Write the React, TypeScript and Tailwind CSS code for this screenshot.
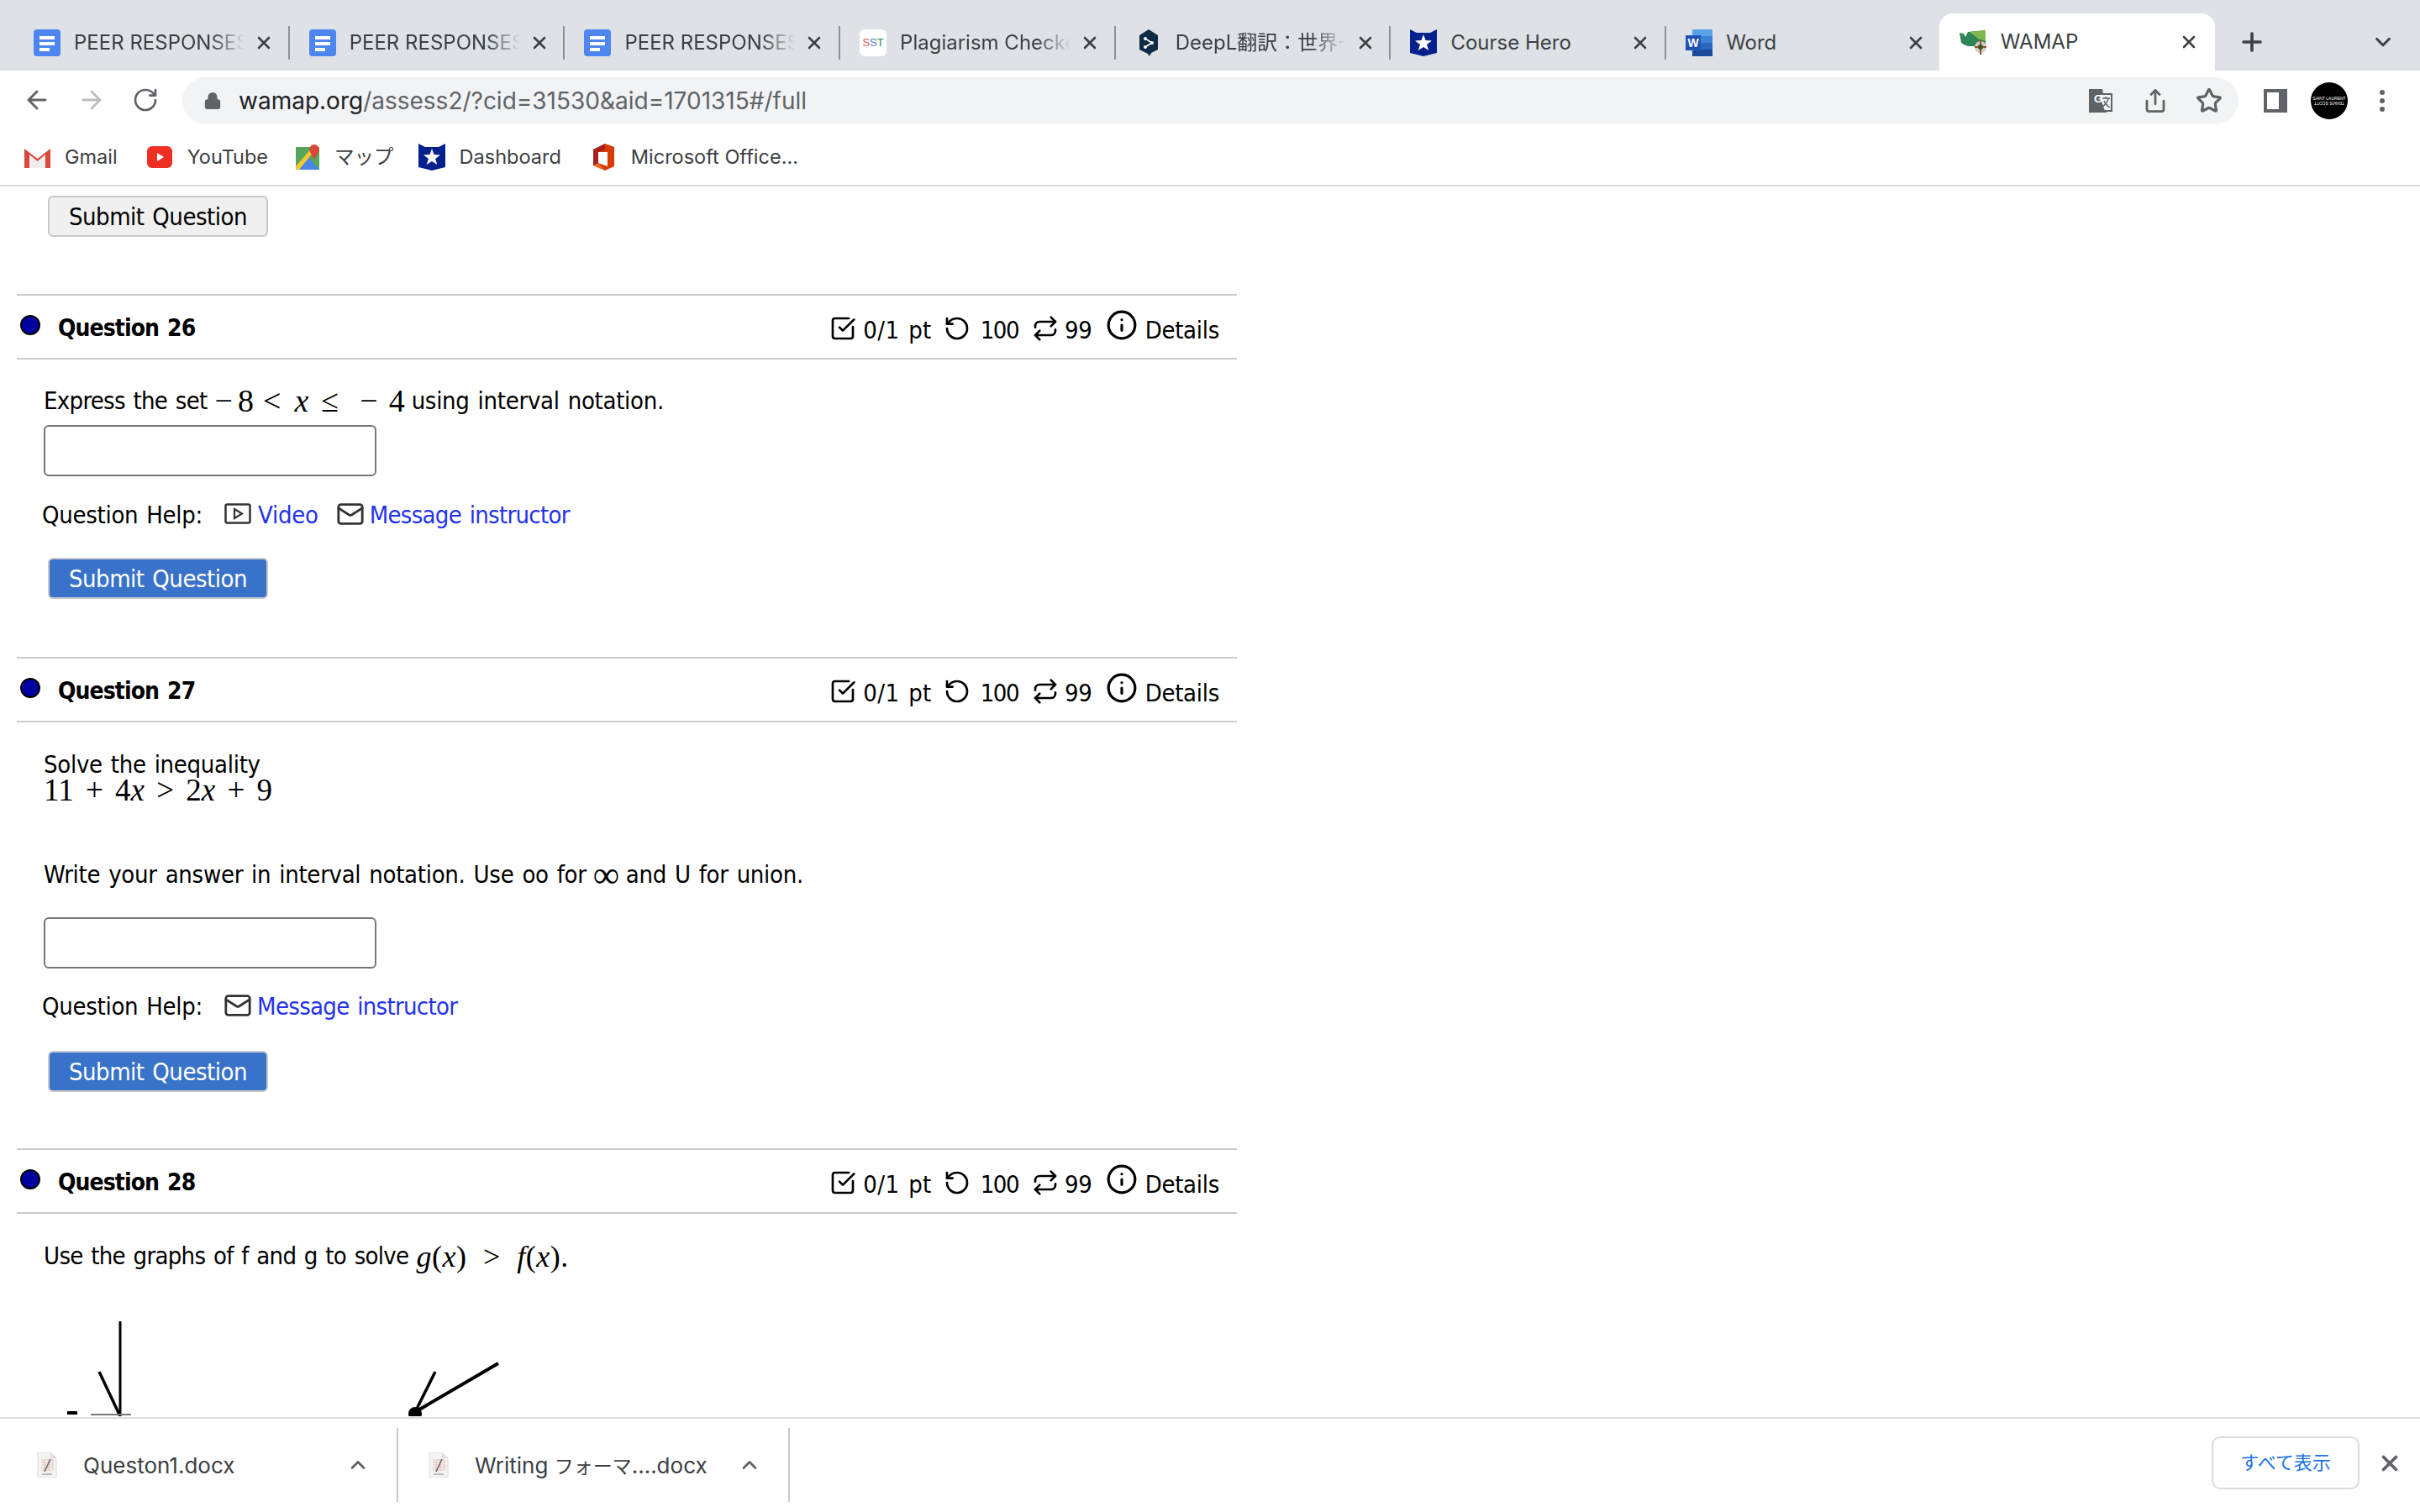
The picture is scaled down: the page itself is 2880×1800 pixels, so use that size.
import React from 'react';
import { ArrowLeft, ArrowRight, ChevronDown, ChevronUp, Info, Lock, Mail, Plus, Repeat, RotateCcw, RotateCw, Share, SquareCheckBig, Star, X } from 'lucide-react';

const chromeFont = "font-['Inter','Noto_Sans_CJK_JP',sans-serif]";
const pageFont = "font-['DejaVu_Sans_Condensed','DejaVu_Sans',sans-serif]";
const mathFont = "font-['Liberation_Serif',serif]";

function DocIcon() {
    return (
        <svg width="32" height="32" viewBox="0 0 32 32" className="shrink-0">
            <rect x="0" y="0" width="32" height="32" rx="4" fill="#4d86ee" />
            <rect x="7" y="8" width="18" height="4" fill="#fff" />
            <rect x="7" y="15" width="18" height="4" fill="#fff" />
            <rect x="7" y="22" width="12" height="4" fill="#fff" />
        </svg>
    );
}

function SstIcon() {
    return (
        <div className="w-[32px] h-[32px] shrink-0 rounded-[6px] bg-white flex items-center justify-center text-[13px] font-['Liberation_Sans',sans-serif]">
            <span className="text-[#e0584f]">S</span>
            <span className="text-[#4a80d8]">S</span>
            <span className="text-[#2f8a55]">T</span>
        </div>
    );
}

function DeeplIcon() {
    return (
        <svg width="32" height="32" viewBox="0 0 32 32" className="shrink-0">
            <path d="M16 0 L27 7 V24 L19 28 L17 32 L15 29 L5 24 V7 Z" fill="#0f2b46" />
            <circle cx="12" cy="11" r="2" fill="#fff" />
            <circle cx="12" cy="21" r="2" fill="#fff" />
            <circle cx="20" cy="16" r="2" fill="#fff" />
            <path d="M12 11 L20 16 L12 21" stroke="#fff" strokeWidth="1.6" fill="none" />
        </svg>
    );
}

function HeroIcon({ size = 32 }: { size?: number }) {
    return (
        <svg width={size} height={size} viewBox="0 0 32 32" className="shrink-0">
            <path d="M0 0 L8 4 H24 L32 0 V28 L16 32 L0 28 Z" fill="#04208c" />
            <path d="M16 6 L18.6 13 L26 13.4 L20 18 L22.3 25 L16 21 L9.7 25 L12 18 L6 13.4 L13.4 13 Z" fill="#fff" />
        </svg>
    );
}

function WordIcon() {
    return (
        <svg width="32" height="32" viewBox="0 0 32 32" className="shrink-0">
            <rect x="8" y="0" width="24" height="8" fill="#5aa3ea" />
            <rect x="8" y="8" width="24" height="8" fill="#3b82d8" />
            <rect x="8" y="16" width="24" height="8" fill="#2a66bd" />
            <rect x="8" y="24" width="24" height="8" fill="#1c4a9a" />
            <rect x="0" y="7" width="18" height="18" fill="#1f54b4" />
            <text x="9" y="21" textAnchor="middle" fontSize="14" fontWeight="700" fill="#fff" fontFamily="Liberation Sans">W</text>
        </svg>
    );
}

function WamapIcon() {
    return (
        <svg width="32" height="32" viewBox="0 0 32 32" className="shrink-0">
            <path d="M0 5 L5 6 L7 10 L10 4 L31 2 V22 L22 21 L10 21 L5 19 L2 17 Z" fill="#2f8555" />
            <path d="M12 4 L31 2 V15 L22 12 Z" fill="#7fb84e" />
            <circle cx="25" cy="22" r="7" fill="#cfcfc0" />
            <path d="M25 14 V31 M18 22 H32" stroke="#a5491e" strokeWidth="2" />
            <circle cx="25" cy="22" r="3" fill="#3a5a2a" />
        </svg>
    );
}

const tabs = [
    { title: 'PEER RESPONSES', icon: <DocIcon />, fade: true },
    { title: 'PEER RESPONSES', icon: <DocIcon />, fade: true },
    { title: 'PEER RESPONSES', icon: <DocIcon />, fade: true },
    { title: 'Plagiarism Checker', icon: <SstIcon />, fade: true },
    { title: 'DeepL翻訳：世界一', icon: <DeeplIcon />, fade: true },
    { title: 'Course Hero', icon: <HeroIcon />, fade: false },
    { title: 'Word', icon: <WordIcon />, fade: false },
];

function Tab({ title, icon, fade }: { title: string; icon: React.ReactNode; fade: boolean }) {
    return (
        <div className="w-[327.7px] h-[40px] shrink-0 flex items-center pl-[23px] border-r-2 border-[#8e9196]">
            {icon}
            <div className={`ml-[16px] w-[203px] overflow-hidden whitespace-nowrap text-[24px] text-[#3c4043] ${fade ? '[mask-image:linear-gradient(to_right,black_80%,transparent)]' : ''}`}>
                {title}
            </div>
            <X size={24} strokeWidth={2.6} className="ml-[11px] text-[#3c4043]" />
        </div>
    );
}

function TabStrip() {
    return (
        <div className={`h-[84px] bg-[#dee1e6] flex items-start pl-[17px] shrink-0 ${chromeFont}`}>
            <div className="flex mt-[31px]">
                {tabs.map((t, i) => (
                    <Tab key={i} {...t} />
                ))}
            </div>
            <div className="w-[328px] h-[68px] mt-[16px] -ml-[3px] shrink-0 bg-white rounded-t-[16px] flex items-center pl-[24px]">
                <WamapIcon />
                <div className="ml-[17px] w-[203px] text-[24px] text-[#3c4043]">WAMAP</div>
                <X size={24} strokeWidth={2.6} className="ml-[9px] text-[#3c4043]" />
            </div>
            <Plus size={34} strokeWidth={2.6} className="mt-[33px] ml-[27px] text-[#3c4043]" />
            <ChevronDown size={30} strokeWidth={2.4} className="mt-[35px] ml-[124px] text-[#3c4043]" />
        </div>
    );
}

function Toolbar() {
    return (
        <div className="h-[64px] pt-[8px] flex items-start bg-white shrink-0">
            <ArrowLeft size={34} strokeWidth={2} className="ml-[27px] mt-[10px] text-[#5f6368]" />
            <ArrowRight size={34} strokeWidth={2} className="ml-[31px] mt-[10px] text-[#babcbe]" />
            <RotateCw size={32} strokeWidth={2} className="ml-[31px] mt-[11px] text-[#5f6368]" />
            <div className={`ml-[28px] w-[2447px] h-[56px] rounded-full bg-[#f1f3f4] flex items-center pl-[25px] ${chromeFont}`}>
                <Lock size={22} fill="#5f6368" className="text-[#5f6368]" />
                <div className="ml-[20px] text-[28px] text-[#5f6368] whitespace-nowrap">
                    <span className="text-[#202124]">wamap.org</span>/assess2/?cid=31530&amp;aid=1701315#/full
                </div>
                <div className="ml-auto flex items-center">
                    <svg width="30" height="30" viewBox="0 0 30 30">
                        <path d="M1 1 H17 L22 29 H1 Z" fill="#5f6368" />
                        <path d="M12 7 H28 V27 H19 Z" fill="#f1f3f4" stroke="#5f6368" strokeWidth="2" />
                        <text x="7" y="17" fontSize="13" fontWeight="700" fill="#fff" fontFamily="Liberation Sans">G</text>
                        <path d="M17 12 H26 M21 10 V12 M24 12 C23 17 20 20 17 22 M19 15 C20 18 23 21 26 23" stroke="#5f6368" strokeWidth="1.4" fill="none" />
                    </svg>
                    <Share size={30} strokeWidth={2.2} className="ml-[35px] text-[#5f6368]" />
                    <Star size={32} strokeWidth={2.4} className="ml-[33px] mr-[19px] text-[#5f6368]" />
                </div>
            </div>
            <div className="ml-[30px] mt-[14px] w-[28px] h-[28px] border-[4px] border-r-[10px] border-[#5f6368] bg-white" />
            <div className="ml-[28px] mt-[6px] w-[44px] h-[44px] rounded-full bg-black flex flex-col items-center justify-center text-white text-[5px] leading-[6px] font-['Liberation_Sans',sans-serif] whitespace-nowrap">
                <span>SAINT LAURENT</span>
                <span className="rotate-180">TRAVIS SCOTT</span>
            </div>
            <div className="ml-[38px] mt-[15px] flex flex-col gap-[4px]">
                <span className="w-[6px] h-[6px] rounded-full bg-[#5f6368]" />
                <span className="w-[6px] h-[6px] rounded-full bg-[#5f6368]" />
                <span className="w-[6px] h-[6px] rounded-full bg-[#5f6368]" />
            </div>
        </div>
    );
}

function Bookmark({ icon, label, gap, left }: { icon: React.ReactNode; label: string; gap: string; left: string }) {
    return (
        <div className={`flex items-center ${left}`}>
            {icon}
            <span className={`${gap} text-[23.5px] text-[#3c4043] whitespace-nowrap`}>{label}</span>
        </div>
    );
}

function BookmarksBar() {
    return (
        <div className={`h-[74px] pt-[6px] flex items-center bg-white border-b-2 border-[#dadce0] shrink-0 ${chromeFont}`}>
            <Bookmark
                left="ml-[29px]"
                gap="ml-[17px]"
                label="Gmail"
                icon={
                    <svg width="31" height="26" viewBox="0 0 31 26">
                        <path d="M6 10 L15.5 18 L25 10 V26 H6 Z" fill="#eeeeee" />
                        <path d="M0 3 L15.5 15 L31 3 V26 H25 V10 L15.5 18 L6 10 V26 H0 Z" fill="#d9483b" />
                    </svg>
                }
            />
            <Bookmark
                left="ml-[35px]"
                gap="ml-[18px]"
                label="YouTube"
                icon={
                    <svg width="30" height="30" viewBox="0 0 30 30">
                        <rect x="0" y="2" width="30" height="26" rx="6" fill="#ef2f24" />
                        <path d="M12 10 L20 15 L12 20 Z" fill="#fff" />
                    </svg>
                }
            />
            <Bookmark
                left="ml-[33px]"
                gap="ml-[18px]"
                label="マップ"
                icon={
                    <svg width="28" height="30" viewBox="0 0 28 30">
                        <rect x="0" y="3" width="28" height="27" fill="#58a55c" />
                        <path d="M0 30 L14 14 L28 30 Z" fill="#4a86e8" />
                        <path d="M0 26 L20 3 H26 L4 30 H0 Z" fill="#f6c731" />
                        <path d="M22 0 C27 0 29 6 27 9 L22 18 L17 9 C15 6 17 0 22 0 Z" fill="#d9483b" />
                    </svg>
                }
            />
            <Bookmark left="ml-[29px]" gap="ml-[17px]" label="Dashboard" icon={<HeroIcon size={32} />} />
            <Bookmark
                left="ml-[38px]"
                gap="ml-[20px]"
                label="Microsoft Office..."
                icon={
                    <svg width="25" height="32" viewBox="0 0 25 32">
                        <path d="M14 0 L25 4 V27 L14 32 L0 26 V7 Z" fill="#d83b01" />
                        <path d="M14 0 L0 7 V26 L6 23 V10 L14 7 Z" fill="#a5201c" />
                        <path d="M6 10 H17 V27 L6 23 Z" fill="#fff" />
                        <path d="M0 26 L14 32 L6 23 Z" fill="#ea6a2d" />
                    </svg>
                }
            />
        </div>
    );
}

function SubmitButton({ primary }: { primary?: boolean }) {
    return (
        <div className={`ml-[5px] w-[262px] h-[49px] pt-[3px] rounded-[6px] border-2 border-[#c8c8c8] flex items-center justify-center tracking-[-0.5px] ${primary ? 'bg-[#3973c9] text-white' : 'bg-[#f0f0f0] text-black'}`}>
            Submit Question
        </div>
    );
}

function QuestionHeader({ n }: { n: number }) {
    return (
        <div className="h-[78px] border-y-2 border-[#cccccc] flex items-center text-black">
            <div className="ml-[4px] w-[24px] h-[24px] rounded-full bg-[#0000a0] border-2 border-black -mt-[4px]" />
            <div className="ml-[21px] text-[28px] tracking-[-0.9px] font-bold whitespace-nowrap mt-[3px]">Question {n}</div>
            <div className="ml-auto mr-[21px] flex items-center whitespace-nowrap">
                <SquareCheckBig size={32} strokeWidth={2} className="mt-[3px]" />
                <span className="ml-[8px] mt-[10px] tracking-[0.4px]">0/1 pt</span>
                <RotateCcw size={32} strokeWidth={2} className="ml-[14px] mt-[3px]" />
                <span className="ml-[12px] mt-[10px] tracking-[-1.5px]">100</span>
                <Repeat size={32} strokeWidth={2} className="ml-[16px] mt-[3px]" />
                <span className="ml-[7px] mt-[10px]">99</span>
                <Info size={38} strokeWidth={2} className="ml-[16px] -mt-[4px]" />
                <span className="ml-[9px] mt-[10px]">Details</span>
            </div>
        </div>
    );
}

function AnswerBox() {
    return <div className="w-[396px] h-[61px] rounded-[6px] border-2 border-[#767676] bg-white" />;
}

function QuestionHelp({ video }: { video?: boolean }) {
    return (
        <div className="h-[40px] -ml-[2px] flex items-center text-black whitespace-nowrap">
            <span>Question Help:</span>
            {video && (
                <>
                    <svg width="32" height="26" viewBox="0 0 32 26" className="ml-[26px] -mt-[4px]">
                        <rect x="1.5" y="1.5" width="29" height="22" rx="2" fill="none" stroke="#333" strokeWidth="2.5" />
                        <path d="M12 7 L21 12.5 L12 18 Z" fill="none" stroke="#333" strokeWidth="2.2" />
                    </svg>
                    <span className="ml-[8px] text-[#2433ea]">Video</span>
                </>
            )}
            <Mail size={34} strokeWidth={2} className={`${video ? 'ml-[21px]' : 'ml-[25px]'} -mt-[4px] text-[#333]`} />
            <span className="ml-[6px] text-[#2433ea] tracking-[-0.7px]">Message instructor</span>
        </div>
    );
}

export default function App() {
    return (
        <div className={`w-[2880px] h-[1800px] flex flex-col overflow-hidden bg-white ${pageFont}`}>
            <TabStrip />
            <Toolbar />
            <BookmarksBar />
            <main className="flex-1 min-h-0 overflow-hidden ml-[20px] w-[1452px] text-[29px] tracking-[-0.3px] [word-spacing:2px] text-black">
                <div className="pt-[11px] pl-[32px]">
                    <SubmitButton />
                </div>

                <section className="mt-[68px]">
                    <QuestionHeader n={26} />
                    <div className="pl-[32px]">
                        <div className="mt-[30px] h-[40px] flex items-center whitespace-nowrap">
                            <span className="tracking-[-0.7px]">Express the set</span>
                            <span className={`ml-[9px] -mt-[3px] text-[38px] leading-[40px] tracking-normal ${mathFont}`}>
                                −<span className="ml-[6px]">8</span>
                                <span className="ml-[11px]">&lt;</span>
                                <i className="ml-[16px]">x</i>
                                <span className="ml-[15px]">≤</span>
                                <span className="ml-[25px]">−</span>
                                <span className="ml-[13px]">4</span>
                            </span>
                            <span className="ml-[8px]">using interval notation.</span>
                        </div>
                        <div className="mt-[8px]">
                            <AnswerBox />
                        </div>
                        <div className="mt-[27px]">
                            <QuestionHelp video />
                        </div>
                        <div className="mt-[30px]">
                            <SubmitButton primary />
                        </div>
                    </div>
                </section>

                <section className="mt-[69px]">
                    <QuestionHeader n={27} />
                    <div className="pl-[32px]">
                        <div className="mt-[34px] leading-[33px]">Solve the inequality</div>
                        <div className={`leading-[28px] text-[37px] tracking-normal [word-spacing:5px] ${mathFont}`}>
                            11 + 4<i>x</i> &gt; 2<i>x</i> + 9
                        </div>
                        <div className="mt-[67px] h-[40px] flex items-center whitespace-nowrap">
                            Write your answer in interval notation. Use oo for
                            <span className={`mx-[8px] leading-none text-[44px] ${mathFont}`}>∞</span>
                            and U for union.
                        </div>
                        <div className="mt-[30px]">
                            <AnswerBox />
                        </div>
                        <div className="mt-[26px]">
                            <QuestionHelp />
                        </div>
                        <div className="mt-[32px]">
                            <SubmitButton primary />
                        </div>
                    </div>
                </section>

                <section className="mt-[67px]">
                    <QuestionHeader n={28} />
                    <div className="pl-[32px] mt-[31px] h-[40px] flex items-center whitespace-nowrap">
                        <span className="tracking-[-0.7px]">Use the graphs of f and g to solve</span>
                        <span className={`ml-[9px] text-[36px] tracking-[0.5px] [word-spacing:10px] ${mathFont}`}>
                            <i>g</i>(<i>x</i>) &gt; <i>f</i>(<i>x</i>).
                        </span>
                    </div>
                    <svg width="700" height="170" viewBox="0 0 700 170" className="block">
                        <path d="M123 57 V170" stroke="#000" strokeWidth="3" />
                        <path d="M98 117 L123 170" stroke="#000" strokeWidth="3.5" />
                        <rect x="60" y="164" width="12" height="4" fill="#000" />
                        <rect x="88" y="167" width="48" height="2" fill="#777" />
                        <path d="M474 165 L573 107" stroke="#000" strokeWidth="4" />
                        <path d="M474 165 L498 117" stroke="#000" strokeWidth="3.5" />
                        <circle cx="474" cy="167" r="8" fill="#000" />
                    </svg>
                </section>
            </main>
            <DownloadShelf />
        </div>
    );
}

function FileIcon() {
    return (
        <svg width="24" height="30" viewBox="0 0 24 30" className="shrink-0">
            <path d="M1 0 H16 L23 7 V30 H1 Z" fill="#f3f3f3" stroke="#dddddd" />
            <path d="M16 0 V7 H23" fill="#dddddd" />
            <path d="M5 9 H19 V21 H5 M5 12 H19 M5 15 H19 M5 18 H19 M9 9 V21 M14 9 V21" fill="none" stroke="#e4b7b0" strokeWidth="0.8" />
            <path d="M9 23 L16 8" stroke="#666" strokeWidth="1.6" />
            <rect x="6" y="25" width="12" height="2" fill="#bbbbbb" />
        </svg>
    );
}

function DownloadItem({ name, width, left }: { name: React.ReactNode; width: string; left: string }) {
    return (
        <div className={`h-[88px] flex items-center border-r-2 border-[#c9c9c9] ${width} ${left}`}>
            <FileIcon />
            <span className="ml-[31px] text-[26px] text-[#3c4043] whitespace-nowrap">{name}</span>
            <ChevronUp size={28} strokeWidth={2.4} className="ml-auto mr-[32px] text-[#5f6368]" />
        </div>
    );
}

function DownloadShelf() {
    return (
        <div className={`h-[113px] shrink-0 border-t-2 border-[#dadce0] bg-white flex items-start pt-[11px] ${chromeFont}`}>
            <DownloadItem name="Queston1.docx" width="w-[474px]" left="pl-[44px]" />
            <DownloadItem
                name={
                    <>
                        Writing <span className="text-[23px]">フォーマ</span>....docx
                    </>
                }
                width="w-[466px]"
                left="pl-[36px]"
            />
            <div className="ml-auto mt-[10px] w-[176px] h-[63px] rounded-[10px] border-2 border-[#dadce0] flex items-center justify-center text-[22px] text-[#1a73e8]">
                すべて表示
            </div>
            <X size={30} strokeWidth={3} className="ml-[21px] mr-[21px] mt-[27px] text-[#5f6368]" />
        </div>
    );
}
